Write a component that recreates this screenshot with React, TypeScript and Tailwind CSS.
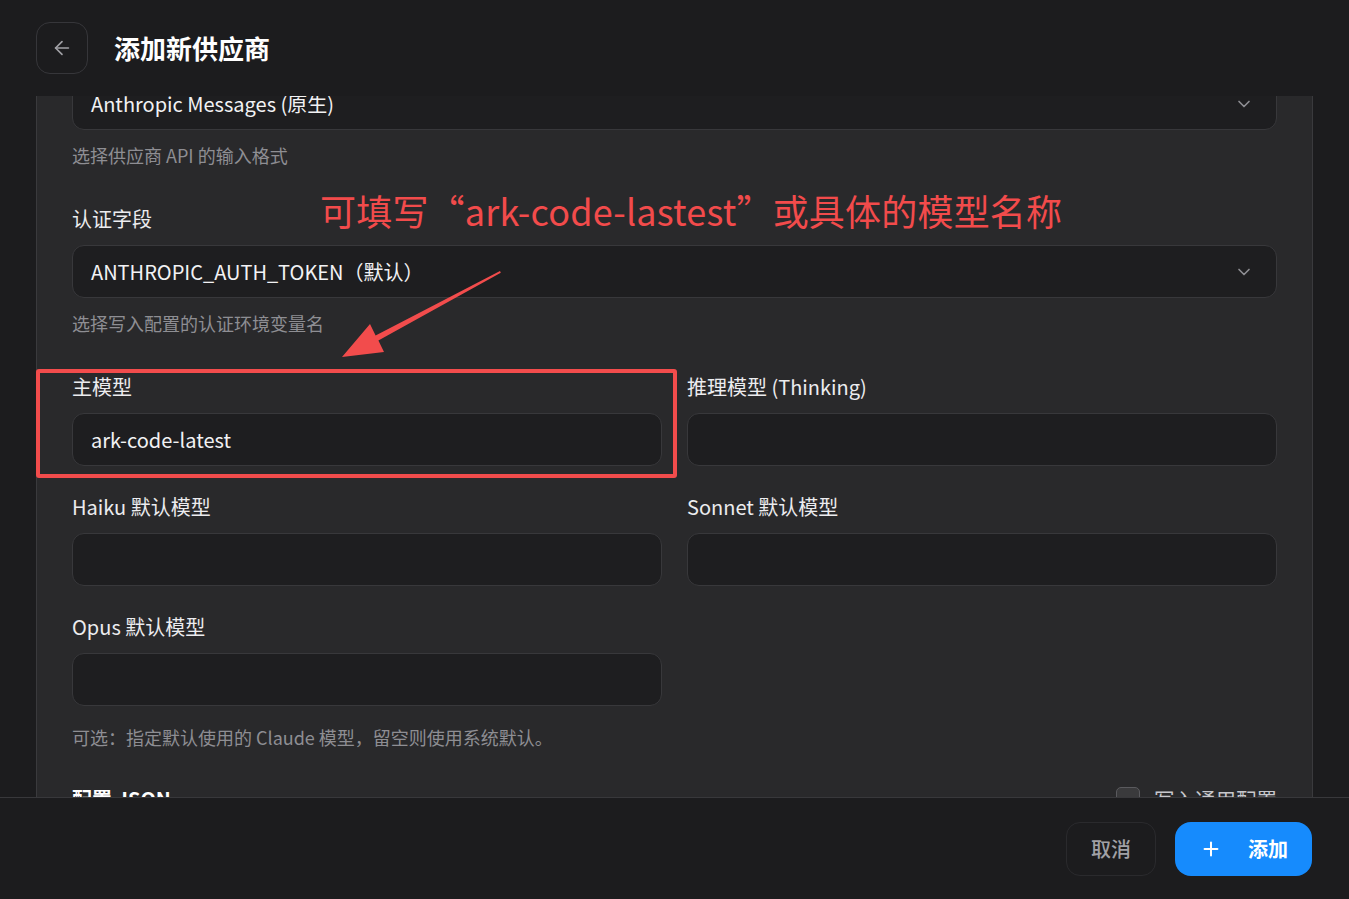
import { ArrowLeft, ChevronDown, Plus } from "lucide-react";

const font = { fontFamily: '"Noto Sans CJK SC", "Noto Sans", sans-serif' };

function Label({ children }: { children: React.ReactNode }) {
  return <div className="h-[28px] text-[20px] leading-[28px] text-[#ececef]">{children}</div>;
}

function TextBox({ value }: { value?: string }) {
  return (
    <div className="mt-[12px] flex h-[53px] items-center rounded-[12px] border border-[#38383b] bg-[#1e1e20] px-[18px] text-[20px] text-[#f2f2f4]">
      {value}
    </div>
  );
}

function Field({ label, value }: { label: string; value?: string }) {
  return (
    <div>
      <Label>{label}</Label>
      <TextBox value={value} />
    </div>
  );
}

function SelectBox({ value }: { value: string }) {
  return (
    <div className="flex h-[53px] items-center justify-between rounded-[12px] border border-[#38383b] bg-[#1e1e20] pl-[18px] pr-[22px] text-[20px] text-[#f2f2f4]">
      <span>{value}</span>
      <ChevronDown className="h-[20px] w-[20px] text-[#8e8e93]" strokeWidth={2} />
    </div>
  );
}

function Help({ children, className = "mt-[12px]" }: { children: React.ReactNode; className?: string }) {
  return <div className={`${className} h-[26px] text-[18px] leading-[26px] text-[#8e8e93]`}>{children}</div>;
}

export default function App() {
  return (
    <div className="relative flex h-[899px] w-[1349px] flex-col overflow-hidden bg-[#1c1c1e]" style={font}>
      {/* header */}
      <div className="flex h-[96px] shrink-0 items-center gap-[26px] px-[36px]">
        <button className="flex h-[52px] w-[52px] items-center justify-center rounded-[14px] border border-[#36363a] text-[#a1a1a6]">
          <ArrowLeft className="h-[22px] w-[22px]" strokeWidth={1.8} />
        </button>
        <h1 className="text-[26px] font-bold leading-none text-white">添加新供应商</h1>
      </div>

      {/* scroll area */}
      <div className="flex-1 overflow-hidden px-[36px]">
        <div className="h-[900px] border-x border-[#3a3a3d] bg-[#29292b] px-[35px]">
          <div className="-mt-[19px]">
            <SelectBox value="Anthropic Messages (原生)" />
            <Help>选择供应商 API 的输入格式</Help>

            <div className="mt-[37px]">
              <Label>认证字段</Label>
              <div className="mt-[12px]">
                <SelectBox value="ANTHROPIC_AUTH_TOKEN（默认）" />
              </div>
              <Help>选择写入配置的认证环境变量名</Help>
            </div>

            <div className="mt-[37px] grid grid-cols-2 gap-x-[25px] gap-y-[27px]">
              <Field label="主模型" value="ark-code-latest" />
              <Field label="推理模型 (Thinking)" />
              <Field label="Haiku 默认模型" />
              <Field label="Sonnet 默认模型" />
              <Field label="Opus 默认模型" />
            </div>
            <Help className="mt-[18px]">可选：指定默认使用的 Claude 模型，留空则使用系统默认。</Help>

            <div className="mt-[35px] flex items-center justify-between">
              <div className="text-[20px] font-semibold leading-[28px] text-white">配置 JSON</div>
              <div className="flex items-center gap-[14px]">
                <div className="h-[24px] w-[24px] rounded-[5px] border border-[#5a5a5e] bg-[#3a3a3c]" />
                <span className="text-[20.5px] leading-[28px] text-[#c7c7cc]">写入通用配置</span>
              </div>
            </div>
          </div>
        </div>
      </div>

      {/* footer */}
      <div className="flex h-[102px] shrink-0 items-center justify-end gap-[19px] border-t border-[#38383b] bg-[#1c1c1e] pr-[37px]">
        <button className="h-[54px] w-[90px] rounded-[14px] border border-[#2a2a2d] text-[20px] font-medium text-[#a1a1a6]">
          取消
        </button>
        <button className="flex h-[54px] w-[137px] items-center gap-[26px] rounded-[16px] bg-[#168bfd] pl-[25px] text-[20px] font-semibold text-white">
          <Plus className="h-[22px] w-[22px]" strokeWidth={2.2} />
          <span>添加</span>
        </button>
      </div>

      {/* annotations */}
      <div className="pointer-events-none absolute left-[36px] top-[369px] h-[109px] w-[641px] rounded-[3px] border-[4px] border-[#f24c4c]" />
      <div className="pointer-events-none absolute left-[320px] top-[187px] whitespace-nowrap text-[36px] leading-[46px] tracking-[0.2px] text-[#f24b4b]">
        可填写“ark-code-lastest”或具体的模型名称
      </div>
      <svg className="pointer-events-none absolute left-0 top-0" width="1349" height="899">
        <polygon
          points="342,357 370,324 375.6,335.4 500,271 500.8,272.8 378.4,340.6 384,352"
          fill="#f24c4c"
        />
      </svg>
    </div>
  );
}
